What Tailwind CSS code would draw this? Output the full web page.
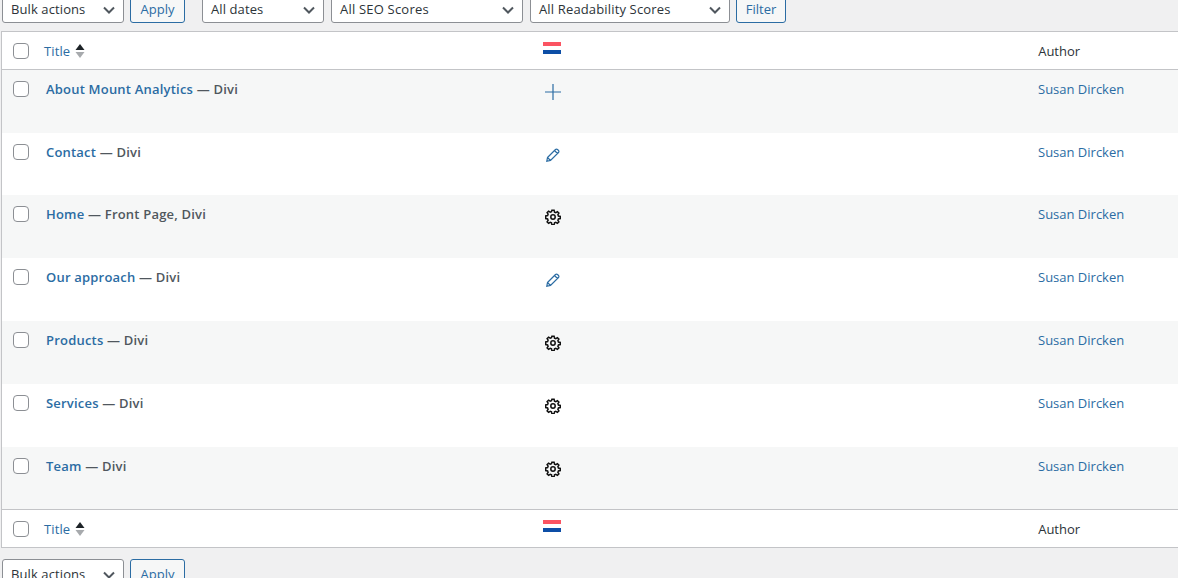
<!DOCTYPE html>
<html lang="en">
<head>
<meta charset="utf-8">
<title>Pages</title>
<script src="https://cdn.jsdelivr.net/npm/@tailwindcss/browser@4"></script>
</head>
<body class="bg-[#f0f0f1] h-[578px] overflow-hidden font-['Open_Sans',sans-serif] text-[13px] text-[#3c434a]">

<!-- Top filters -->
<div class="flex items-start h-[28px] -mt-[5px] pl-[2px]">
  <div class="w-[122px] h-[28px] flex items-center justify-between pt-[1px] pl-[8px] pr-[7px] bg-white border border-[#8c8f94] rounded-[3px] text-[#2c3338] tracking-[0.1px]">Bulk actions
    <svg class="w-[14px] h-[14px]" viewBox="0 0 14 14" fill="none" stroke="#50575e" stroke-width="2"><path d="M2 4.5l5 5 5-5"/></svg>
  </div>
  <div class="w-[55px] h-[28px] ml-[6px] flex items-center justify-center pt-[1px] bg-[#f6f7f7] border border-[#2b6ca3] rounded-[3px] text-[#2b6ca3]">Apply</div>
  <div class="w-[122px] h-[28px] ml-[17px] flex items-center justify-between pt-[1px] pl-[8px] pr-[7px] bg-white border border-[#8c8f94] rounded-[3px] text-[#2c3338] tracking-[0.1px]">All dates
    <svg class="w-[14px] h-[14px]" viewBox="0 0 14 14" fill="none" stroke="#50575e" stroke-width="2"><path d="M2 4.5l5 5 5-5"/></svg>
  </div>
  <div class="w-[192px] h-[28px] ml-[7px] flex items-center justify-between pt-[1px] pl-[8px] pr-[7px] bg-white border border-[#8c8f94] rounded-[3px] text-[#2c3338] tracking-[0.2px]">All SEO Scores
    <svg class="w-[14px] h-[14px]" viewBox="0 0 14 14" fill="none" stroke="#50575e" stroke-width="2"><path d="M2 4.5l5 5 5-5"/></svg>
  </div>
  <div class="w-[200px] h-[28px] ml-[7px] flex items-center justify-between pt-[1px] pl-[8px] pr-[7px] bg-white border border-[#8c8f94] rounded-[3px] text-[#2c3338] tracking-[0.15px]">All Readability Scores
    <svg class="w-[14px] h-[14px]" viewBox="0 0 14 14" fill="none" stroke="#50575e" stroke-width="2"><path d="M2 4.5l5 5 5-5"/></svg>
  </div>
  <div class="w-[50px] h-[28px] ml-[6px] flex items-center justify-center pt-[1px] bg-[#f6f7f7] border border-[#2b6ca3] rounded-[3px] text-[#2b6ca3]">Filter</div>
</div>

<!-- Pages table -->
<div class="w-[1190px] ml-[1px] mt-[8px] bg-white border border-[#c3c4c7]">
  <div class="flex items-center h-[38px] border-b border-[#c3c4c7]">
    <span class="w-[16px] h-[16px] ml-[11px] bg-white border border-[#8c8f94] rounded-[4px]"></span>
    <a class="ml-[15px] pt-[2px] text-[#2b6ca3] tracking-[0.1px]">Title</a>
    <svg class="w-[10px] h-[16px] ml-[5px]" viewBox="0 0 10 16"><path d="M5 1l4.5 6H.5z" fill="#1d2327"/><path d="M5 15L.5 9h9z" fill="#a7aaad"/></svg>
    <svg class="w-[18px] h-[12px] ml-[458px] -mt-[6px]" viewBox="0 0 18 12"><rect width="18" height="4" fill="#fb5462"/><rect y="4" width="18" height="4" fill="#fff"/><rect y="8" width="18" height="4" fill="#0d4ea6"/></svg>
    <span class="ml-[477px] pt-[2px] text-[#2c3338]">Author</span>
  </div>

  <div class="flex items-start h-[63px] bg-[#f6f7f7]">
    <span class="w-[16px] h-[16px] mt-[11px] ml-[11px] bg-white border border-[#8c8f94] rounded-[4px]"></span>
    <div class="w-[499px] ml-[17px] mt-[10px] font-semibold tracking-[0.2px] text-[#50575e]"><a class="text-[#2b6ca3]">About Mount Analytics</a> — Divi</div>
    <svg class="w-[16px] h-[16px] mt-[14px]" viewBox="0 0 16 16" fill="none" stroke="#2b6ca3" stroke-width="1.2"><path d="M8 0v16M0 8h16"/></svg>
    <a class="ml-[477px] mt-[10px] text-[#2b6ca3]">Susan Dircken</a>
  </div>

  <div class="flex items-start h-[62px] bg-white">
    <span class="w-[16px] h-[16px] mt-[11px] ml-[11px] bg-white border border-[#8c8f94] rounded-[4px]"></span>
    <div class="w-[499px] ml-[17px] mt-[10px] font-semibold tracking-[0.2px] text-[#50575e]"><a class="text-[#2b6ca3]">Contact</a> — Divi</div>
    <svg class="w-[16px] h-[16px] mt-[14px]" viewBox="0 0 16 16" fill="none" stroke="#2b6ca3" stroke-width="1.2"><path d="M2.5 10.5L10.5 2.5a1.4 1.4 0 0 1 2 0l1 1a1.4 1.4 0 0 1 0 2L5.5 13.5 1.8 14.2zM9.5 3.5l3 3M2.5 10.5l3 3"/></svg>
    <a class="ml-[477px] mt-[10px] text-[#2b6ca3]">Susan Dircken</a>
  </div>

  <div class="flex items-start h-[63px] bg-[#f6f7f7]">
    <span class="w-[16px] h-[16px] mt-[11px] ml-[11px] bg-white border border-[#8c8f94] rounded-[4px]"></span>
    <div class="w-[499px] ml-[17px] mt-[10px] font-semibold tracking-[0.2px] text-[#50575e]"><a class="text-[#2b6ca3]">Home</a> — Front Page, Divi</div>
    <svg class="w-[16px] h-[16px] mt-[14px]" viewBox="0 0 16 16" fill="none" stroke="#111" stroke-width="1.5"><circle cx="8" cy="8" r="2.2"/><path d="M6.9 1.2h2.2l.4 1.9 1.3.5 1.6-1 1.5 1.5-1 1.6.5 1.3 1.9.4v2.2l-1.9.4-.5 1.3 1 1.6-1.5 1.5-1.6-1-1.3.5-.4 1.9H6.9l-.4-1.9-1.3-.5-1.6 1-1.5-1.5 1-1.6-.5-1.3-1.9-.4V6.9l1.9-.4.5-1.3-1-1.6 1.5-1.5 1.6 1 1.3-.5z"/></svg>
    <a class="ml-[477px] mt-[10px] text-[#2b6ca3]">Susan Dircken</a>
  </div>

  <div class="flex items-start h-[63px] bg-white">
    <span class="w-[16px] h-[16px] mt-[11px] ml-[11px] bg-white border border-[#8c8f94] rounded-[4px]"></span>
    <div class="w-[499px] ml-[17px] mt-[10px] font-semibold tracking-[0.2px] text-[#50575e]"><a class="text-[#2b6ca3]">Our approach</a> — Divi</div>
    <svg class="w-[16px] h-[16px] mt-[14px]" viewBox="0 0 16 16" fill="none" stroke="#2b6ca3" stroke-width="1.2"><path d="M2.5 10.5L10.5 2.5a1.4 1.4 0 0 1 2 0l1 1a1.4 1.4 0 0 1 0 2L5.5 13.5 1.8 14.2zM9.5 3.5l3 3M2.5 10.5l3 3"/></svg>
    <a class="ml-[477px] mt-[10px] text-[#2b6ca3]">Susan Dircken</a>
  </div>

  <div class="flex items-start h-[63px] bg-[#f6f7f7]">
    <span class="w-[16px] h-[16px] mt-[11px] ml-[11px] bg-white border border-[#8c8f94] rounded-[4px]"></span>
    <div class="w-[499px] ml-[17px] mt-[10px] font-semibold tracking-[0.2px] text-[#50575e]"><a class="text-[#2b6ca3]">Products</a> — Divi</div>
    <svg class="w-[16px] h-[16px] mt-[14px]" viewBox="0 0 16 16" fill="none" stroke="#111" stroke-width="1.5"><circle cx="8" cy="8" r="2.2"/><path d="M6.9 1.2h2.2l.4 1.9 1.3.5 1.6-1 1.5 1.5-1 1.6.5 1.3 1.9.4v2.2l-1.9.4-.5 1.3 1 1.6-1.5 1.5-1.6-1-1.3.5-.4 1.9H6.9l-.4-1.9-1.3-.5-1.6 1-1.5-1.5 1-1.6-.5-1.3-1.9-.4V6.9l1.9-.4.5-1.3-1-1.6 1.5-1.5 1.6 1 1.3-.5z"/></svg>
    <a class="ml-[477px] mt-[10px] text-[#2b6ca3]">Susan Dircken</a>
  </div>

  <div class="flex items-start h-[63px] bg-white">
    <span class="w-[16px] h-[16px] mt-[11px] ml-[11px] bg-white border border-[#8c8f94] rounded-[4px]"></span>
    <div class="w-[499px] ml-[17px] mt-[10px] font-semibold tracking-[0.2px] text-[#50575e]"><a class="text-[#2b6ca3]">Services</a> — Divi</div>
    <svg class="w-[16px] h-[16px] mt-[14px]" viewBox="0 0 16 16" fill="none" stroke="#111" stroke-width="1.5"><circle cx="8" cy="8" r="2.2"/><path d="M6.9 1.2h2.2l.4 1.9 1.3.5 1.6-1 1.5 1.5-1 1.6.5 1.3 1.9.4v2.2l-1.9.4-.5 1.3 1 1.6-1.5 1.5-1.6-1-1.3.5-.4 1.9H6.9l-.4-1.9-1.3-.5-1.6 1-1.5-1.5 1-1.6-.5-1.3-1.9-.4V6.9l1.9-.4.5-1.3-1-1.6 1.5-1.5 1.6 1 1.3-.5z"/></svg>
    <a class="ml-[477px] mt-[10px] text-[#2b6ca3]">Susan Dircken</a>
  </div>

  <div class="flex items-start h-[62px] bg-[#f6f7f7]">
    <span class="w-[16px] h-[16px] mt-[11px] ml-[11px] bg-white border border-[#8c8f94] rounded-[4px]"></span>
    <div class="w-[499px] ml-[17px] mt-[10px] font-semibold tracking-[0.2px] text-[#50575e]"><a class="text-[#2b6ca3]">Team</a> — Divi</div>
    <svg class="w-[16px] h-[16px] mt-[14px]" viewBox="0 0 16 16" fill="none" stroke="#111" stroke-width="1.5"><circle cx="8" cy="8" r="2.2"/><path d="M6.9 1.2h2.2l.4 1.9 1.3.5 1.6-1 1.5 1.5-1 1.6.5 1.3 1.9.4v2.2l-1.9.4-.5 1.3 1 1.6-1.5 1.5-1.6-1-1.3.5-.4 1.9H6.9l-.4-1.9-1.3-.5-1.6 1-1.5-1.5 1-1.6-.5-1.3-1.9-.4V6.9l1.9-.4.5-1.3-1-1.6 1.5-1.5 1.6 1 1.3-.5z"/></svg>
    <a class="ml-[477px] mt-[10px] text-[#2b6ca3]">Susan Dircken</a>
  </div>

  <div class="flex items-center h-[38px] border-t border-[#c3c4c7]">
    <span class="w-[16px] h-[16px] ml-[11px] bg-white border border-[#8c8f94] rounded-[4px]"></span>
    <a class="ml-[15px] pt-[2px] text-[#2b6ca3] tracking-[0.1px]">Title</a>
    <svg class="w-[10px] h-[16px] ml-[5px]" viewBox="0 0 10 16"><path d="M5 1l4.5 6H.5z" fill="#1d2327"/><path d="M5 15L.5 9h9z" fill="#a7aaad"/></svg>
    <svg class="w-[18px] h-[12px] ml-[458px] -mt-[6px]" viewBox="0 0 18 12"><rect width="18" height="4" fill="#fb5462"/><rect y="4" width="18" height="4" fill="#fff"/><rect y="8" width="18" height="4" fill="#0d4ea6"/></svg>
    <span class="ml-[477px] pt-[2px] text-[#2c3338]">Author</span>
  </div>
</div>

<!-- Bottom bulk actions -->
<div class="flex items-start h-[32px] mt-[11px] pl-[2px]">
  <div class="w-[122px] h-[32px] flex items-center justify-between pl-[8px] pr-[7px] bg-white border border-[#8c8f94] rounded-[3px] text-[#2c3338] tracking-[0.1px]">Bulk actions
    <svg class="w-[14px] h-[14px]" viewBox="0 0 14 14" fill="none" stroke="#50575e" stroke-width="2"><path d="M2 4.5l5 5 5-5"/></svg>
  </div>
  <div class="w-[55px] h-[32px] ml-[6px] flex items-center justify-center bg-[#f6f7f7] border border-[#2b6ca3] rounded-[3px] text-[#2b6ca3]">Apply</div>
</div>

</body>
</html>
